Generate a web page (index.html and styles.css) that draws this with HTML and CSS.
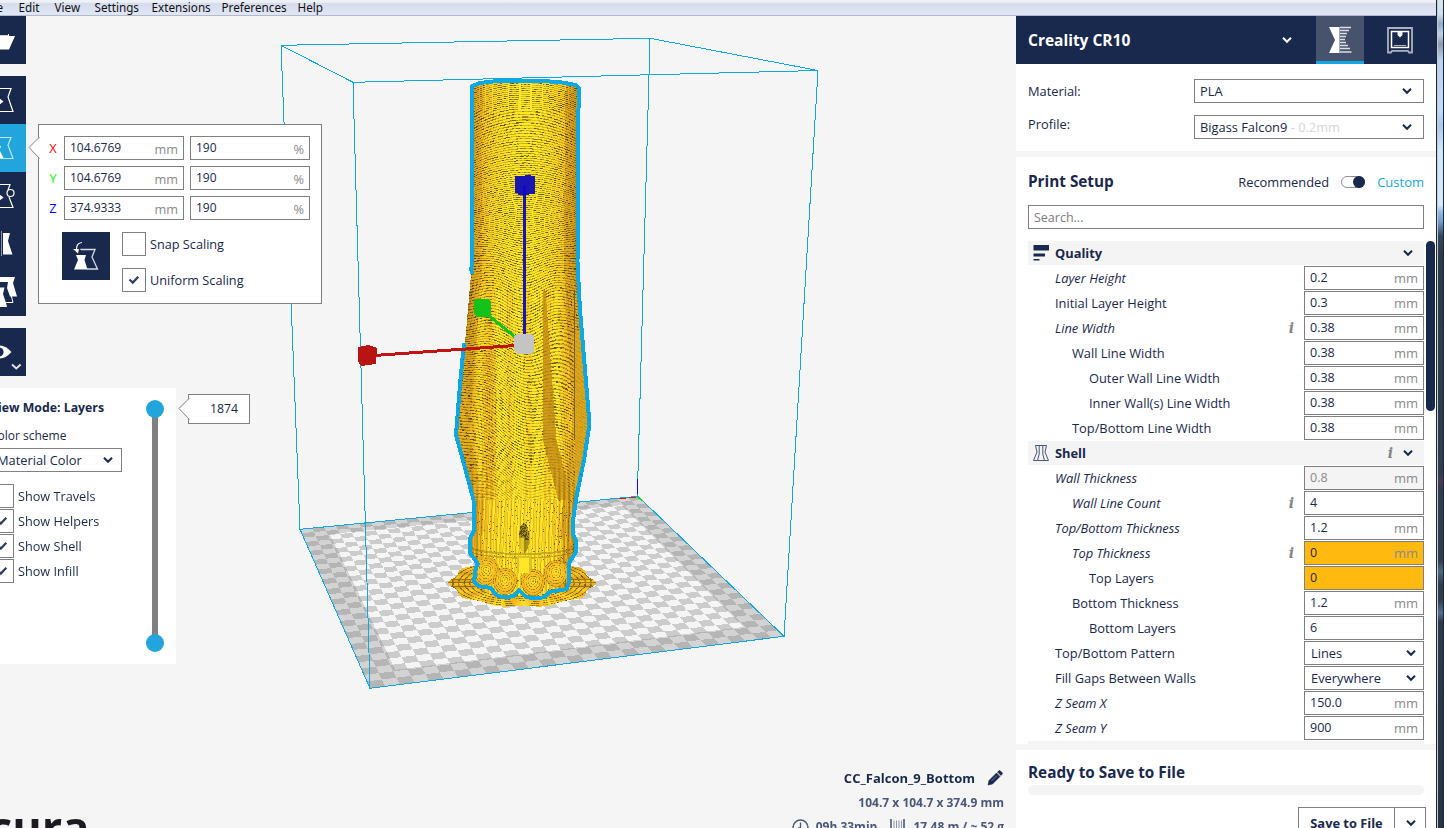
FILE: index.html
```html
<!DOCTYPE html>
<html lang="en">
<head>
<meta charset="utf-8">
<title>Cura</title>
<link rel="stylesheet" href="styles.css">
</head>
<body>
<svg class="defs" width="0" height="0">
  <symbol id="chev" viewBox="0 0 10 8"><path d="M1 1.8 L5 5.8 L9 1.8" fill="none" stroke="currentColor" stroke-width="2"/></symbol>
  <symbol id="check" viewBox="0 0 12 10"><path d="M1.5 4.5 L4.8 7.6 L10.3 1.8" fill="none" stroke="currentColor" stroke-width="2.2"/></symbol>
</svg>
<div class="window">
  <div class="app">
    <nav class="menubar">
      <span class="m-file">File</span><span class="m-edit">Edit</span><span class="m-view">View</span><span class="m-set">Settings</span><span class="m-ext">Extensions</span><span class="m-pref">Preferences</span><span>Help</span>
    </nav>
    <div class="main">
      <section class="stage">
        <canvas class="layer" id="bed" width="1016" height="812"></canvas>
        <svg class="layer" width="1016" height="812" viewBox="0 16 1016 812" shape-rendering="crispEdges" fill="none" stroke="#0fa8e0">
          <path d="M281 45.300 L650 38.300 L818 70.500 L353 82.300 Z M300 529.300 L638 496.300 L784 636.300 L370 688.300 Z M281 45.500 L300 529.500 M353 82.500 L370 688.500 M818 70.500 L784 636.500 M650 38.500 L637.300 496"/>
          <path d="M637.300 479 V494" stroke="#0a0af0"/><path d="M619 498.500 H626 M629 497.500 H636" stroke="#e01818"/><path d="M637 496.500 L642 500.500" stroke="#10e010" stroke-width="1.500"/>
        </svg>
        <canvas class="layer" id="model" width="1016" height="812"></canvas>
        <svg class="layer" width="1016" height="812" viewBox="0 16 1016 812" fill="none">
          <g stroke="#0ca9e4" stroke-width="4" stroke-linejoin="round" shape-rendering="crispEdges">
            <path d="M471.500 274 L472 86 L480 83 L502 80.500 L538 80.500 L562 82.500 L576 85 L579 88 L578 130 L577.500 262 L580 310 L585 370 L589.500 424 L584 460 L577 494 L573 520 L572.500 534 L576 540 L576 552 L569 563 L569 582 L567 589 L549 592 L545 597 L536 598.500 L526 597 L519 590 L514 596 L504 597.500 L496 595 L491 588 L478 586 L474 581 L476 567 L478 564 L470 553 L470 538 L474 531 L473.500 500 L465 468 L456 435 L460 385 L464 343"/>
            <path d="M465 345 L460 385 L456.500 434 L465 466 L474 501" stroke="#1070e8" stroke-width="1" stroke-dasharray="1 6"/>
            <path d="M585 370 L589.500 424 L584 460 L577 494" stroke="#1070e8" stroke-width="1" stroke-dasharray="1 6"/>
          </g>
          <g shape-rendering="crispEdges">
            <path d="M482 310 L520 341" stroke="#12c41a" stroke-width="3"/>
            <path d="M367 356 L522 345" stroke="#c01414" stroke-width="3"/>
            <path d="M524.500 185 V342" stroke="#1a14b4" stroke-width="3"/>
            <path d="M515 176 H525 V175 H531 V176 H535 V194 H529 V195 H518 V193 H515 Z" fill="#1a16b0"/>
            <path d="M524 185 H526 V195 H523 V185 Z" fill="#1208c8"/>
            <path d="M474 300 L478 299 H488 L491 302 V314 L489 317 H477 L474 314 Z" fill="#12c41a"/>
            <path d="M358 347 L368 345 L375 347 L377 349 L376 364 L361 366 L358 361 Z" fill="#b81414"/>
            <path d="M514 336 L517 334 H531 L534 337 V351 L531 354 H518 L514 351 Z" fill="#c4c4c4"/>
          </g>
        </svg>

        <div class="toolbar">
          <div class="tool"><svg viewBox="0 0 48 48"><path d="M12 18 H31 V20 H37 L31 33.500 H10 Z" fill="#fff"/><path d="M21 18.500 H30" stroke="#19284d" stroke-width="1.400"/></svg></div>
          <div class="group">
            <div class="tool"><svg viewBox="0 0 48 48" fill="none" stroke="#fff" stroke-width="1.200"><path d="M14 12.500 H33 L30 21 L35 35.500 H12"/><path d="M21 22 L25.500 25.500 L21 29 Z" fill="#fff" stroke="none"/></svg></div>
            <div class="tool active"><svg viewBox="0 0 48 48" fill="none" stroke="#bfe4f4" stroke-width="1.200"><path d="M14 13.500 H33 L30 21 L35 34.500 H12"/><path d="M14 22 H23 L21.500 26 L25.500 34 H12 Z" fill="#fff" stroke="none"/></svg></div>
            <div class="tool"><svg viewBox="0 0 48 48" fill="none" stroke="#fff" stroke-width="1.200"><path d="M14 12.500 H32 L30 18 M31 25 L35 35.500 H12"/><circle cx="32.500" cy="21" r="3.500"/><path d="M21 22 L25.500 25.500 L21 29 Z" fill="#fff" stroke="none"/></svg></div>
            <div class="tool"><svg viewBox="0 0 48 48"><path d="M25 13 H32 L30 21 L34.500 34.500 H25 Z" fill="#fff"/><path d="M23.500 11 V36" stroke="#8c96ae" stroke-width="1"/></svg></div>
            <div class="tool"><svg viewBox="0 0 48 48"><path d="M15 9 H37 L35 15 L39 28.500 H32 L29 20 L30 14 H18 Z" fill="#fff"/><path d="M16 19.500 H26.500 L25 26 L28 35 L29 39 H12 Z" fill="#fff"/><path d="M24 34.500 H35 L31.500 21" fill="none" stroke="#fff"/></svg></div>
          </div>
          <div class="tool"><svg viewBox="0 0 48 48"><path d="M10 24 Q22 11 33.500 24 Q22 37 10 24 Z" fill="#fff"/><circle cx="21" cy="24" r="4.600" fill="#19284d"/><path d="M34 36.500 L38.300 40.500 L42.600 36.500" fill="none" stroke="#dfe2ea" stroke-width="2"/></svg></div>
        </div>

        <div class="scale-panel">
          <svg class="pointer" viewBox="0 0 12 22"><path d="M11.500 0 L1 10.500 L11.500 21.500" fill="#fff" stroke="#808080"/></svg>
          <div class="axis"><b class="red">X</b><div class="field">104.6769<i>mm</i></div><div class="field">190<i>%</i></div></div>
          <div class="axis"><b class="green">Y</b><div class="field">104.6769<i>mm</i></div><div class="field">190<i>%</i></div></div>
          <div class="axis"><b class="blue">Z</b><div class="field">374.9333<i>mm</i></div><div class="field">190<i>%</i></div></div>
          <div class="scale-opts">
            <div class="reset"><svg viewBox="0 0 48 48"><path d="M19 18 V17.500 H33 L30 25 L35.500 37 H25" fill="none" stroke="#d6dae4" stroke-width="1.300"/><path d="M14 23 H24 L22.500 28 L25.500 37.500 H12 L16 28 Z" fill="#fff"/><path d="M20 10.500 Q14.500 11 14.500 17" fill="none" stroke="#fff" stroke-width="1.200"/><path d="M11 17 H17 L16 21.500 Z" fill="#fff"/></svg></div>
            <div class="checks">
              <label class="check"><span class="box"></span>Snap Scaling</label>
              <label class="check"><span class="box"><svg><use href="#check"/></svg></span>Uniform Scaling</label>
            </div>
          </div>
        </div>

        <div class="view-panel">
          <div class="view-left">
            <div class="view-title">View Mode: Layers</div>
            <div class="scheme">Color scheme</div>
            <div class="combo scheme-combo">Material Color<svg class="chev"><use href="#chev"/></svg></div>
            <div class="show-list">
              <label class="check"><span class="box"></span>Show Travels</label>
              <label class="check"><span class="box"><svg><use href="#check"/></svg></span>Show Helpers</label>
              <label class="check"><span class="box"><svg><use href="#check"/></svg></span>Show Shell</label>
              <label class="check"><span class="box"><svg><use href="#check"/></svg></span>Show Infill</label>
            </div>
          </div>
          <div class="slider"><span class="knob"></span><span class="track"></span><span class="knob"></span></div>
        </div>
        <div class="layer-label"><svg class="pointer" viewBox="0 0 12 22"><path d="M11.500 0 L1 10.500 L11.500 21.500" fill="#fff" stroke="#808080"/></svg>1874</div>

        <div class="logo">cura</div>
        <div class="job">
          <div class="job-name"><span>CC_Falcon_9_Bottom</span><svg viewBox="0 0 16 16"><path d="M1 15 L2 10.500 L9.500 3 L13 6.500 L5.500 14 Z M10.500 2 L12 .7 Q12.600 .3 13.200 .8 L15.200 2.800 Q15.700 3.400 15.200 4 L14 5.500 Z" fill="#19284d" stroke="#19284d" stroke-width=".6"/><path d="M4.500 11 L10 5.500" stroke="#9aa3b8" stroke-width=".7"/></svg></div>
          <div class="job-size">104.7 x 104.7 x 374.9 mm</div>
          <div class="job-time"><svg viewBox="0 0 17 17"><circle cx="8.500" cy="8.500" r="7.500" fill="none" stroke="#4a5777" stroke-width="1.500"/><path d="M8.500 3.500 V9 H6" fill="none" stroke="#4a5777" stroke-width="1.300"/></svg><span class="t-time">09h 33min</span><svg class="spool" viewBox="0 0 15 17"><path d="M1 0 V17 M14 0 V17" stroke="#4a5777" stroke-width="1.600"/><path d="M4 1.500 V14 M6.500 1.500 V14 M9 1.500 V14 M11.500 1.500 V14" stroke="#8a93a8"/></svg><span>17.48 m / ~ 52 g</span></div>
        </div>
      </section>

      <aside class="sidebar">
        <header class="head">
          <div class="machine">Creality CR10<svg class="chev"><use href="#chev"/></svg></div>
          <div class="tab on"><svg viewBox="0 0 48 48"><path d="M13 11 H23.500 V37 H13 L19 24 Z" fill="#fff"/><path d="M24 11.500 H35 M24 14.500 H33 M24 17.500 H31 M24 20.500 H30 M24 23.500 H29 M24 26.500 H30 M24 29.500 H32 M24 32.500 H34 M24 36 H35.500" stroke="#dcdfe6" stroke-width="1.700"/></svg></div>
          <div class="tab"><svg viewBox="0 0 48 48" fill="none" stroke="#a9b1c4" stroke-width="1.800"><path d="M12 36.500 V12 H36 V36.500 H33 L32 34.800 H16 L15 36.500 Z"/><rect x="15.500" y="15.500" width="17" height="16" stroke="#fff" stroke-width="1.500"/><path d="M18 29.500 H30" stroke-width="1"/><path d="M21.500 16 H26.500 V19 L24 21.500 L21.500 19 Z" fill="#fff" stroke="none"/></svg></div>
        </header>
        <div class="presets">
          <div class="preset p1"><span>Material:</span><div class="combo">PLA<svg class="chev"><use href="#chev"/></svg></div></div>
          <div class="preset"><span class="up">Profile:</span><div class="combo">Bigass Falcon9<em>&nbsp;- 0.2mm</em><svg class="chev"><use href="#chev"/></svg></div></div>
        </div>
        <div class="setup">
          <div class="setup-head"><h2>Print Setup</h2><span class="rec">Recommended</span><span class="switch"><span></span></span><span class="custom">Custom</span></div>
          <div class="search">Search...</div>
          <div class="list-wrap">
            <div class="list" id="list"></div>
            <div class="scroll"></div>
          </div>
        </div>
        <div class="save">
          <h2>Ready to Save to File</h2>
          <div class="progress"></div>
          <div class="save-btn"><span>Save to File</span><span class="drop"><svg class="chev"><use href="#chev"/></svg></span></div>
        </div>
      </aside>
    </div>
  </div>
  <div class="edge"></div>
</div>
<script src="script.js"></script>
</body>
</html>
```
FILE: styles.css
```css
* { box-sizing: border-box; }
html, body { margin: 0; height: 100%; overflow: hidden; }
body { width: 1444px; height: 828px; font: 12.850px/18px "Open Sans", sans-serif; color: #19284d; background: #f5f5f5; }
.defs { position: absolute; }
.window { display: flex; height: 828px; overflow: hidden; }
.app { width: 1436px; display: flex; flex-direction: column; }
.edge { width: 8px; border-left: 1px solid #1d2630; border-right: 1px solid #1c2530; box-shadow: inset 1px 0 #c3ccd6;
  background: linear-gradient(#d4e8e6 0, #cfe2ee 14px, #8fa9c6 24px, #bcd4ec 34px, #8c9cb0 44px, #b9d3ef 60px, #bfdcf8 110px, #a9c9ea 125px, #cfe6fb 150px, #d6eafc 205px, #8fbbe4 212px, #6f9ccb 222px, #33465a 236px, #2a3a4b 260px, #2c3d4e 470px, #4b3a52 482px, #2c3d4e 490px, #2c3d4e 560px, #4d6680 571px, #2c3d4e 585px, #2c3d4e 600px, #54708c 613px, #2a3a4a 622px, #263544 828px); }

.menubar { height: 16px; flex: none; display: flex; align-items: center; background: linear-gradient(#f0f2f8 0, #e8ebf4 3px, #d6dcec 3px, #e1e6f6 15px); border-bottom: 1px solid #b2b9c8; font: 11.700px/14px "Noto Sans", sans-serif; color: #111; padding-bottom: 2px; overflow: hidden; white-space: nowrap; }
.menubar span { flex: none; }
.m-file { width: 34px; margin-left: -15.500px; } .m-edit { width: 36px; } .m-view { width: 40px; } .m-set { width: 57px; } .m-ext { width: 70px; } .m-pref { width: 76px; }

.main { flex: 1; display: flex; min-height: 0; }
.stage { width: 1016px; height: 812px; position: relative; overflow: hidden; background: #f5f5f5; }
.layer { position: absolute; left: 0; top: 0; }

.toolbar { position: absolute; left: -22px; top: 0; width: 48px; display: flex; flex-direction: column; gap: 12px; }
.tool { height: 48px; background: #19284d; }
.tool svg, .reset svg, .tab svg { display: block; width: 48px; height: 48px; }
.tool.active { background: #22a5dc; }

.field { position: relative; display: flex; justify-content: space-between; align-items: center; height: 24px; border: 1px solid #808080; background: #fff; padding: 0 5px; font-size: 12px; }
.field i { font-style: normal; color: #8a8a8a; font-size: 13px; }
.combo { display: flex; align-items: center; height: 24px; border: 1px solid #808080; background: #fff; padding: 0 11px 0 5px; white-space: nowrap; }
.combo em { font-style: normal; color: #d6d6d6; }
.chev { width: 10px; height: 8px; margin-left: auto; flex: none; display: block; }
.pointer { position: absolute; width: 12px; height: 22px; left: -11px; }

.scale-panel { position: absolute; left: 38px; top: 108px; width: 284px; height: 180px; border: 1px solid #808080; background: #fff; padding: 11px 11px 0 9px; }
.scale-panel .pointer { top: 12px; }
.axis { display: flex; gap: 6px; margin-bottom: 6px; align-items: center; }
.axis b { width: 10px; text-align: center; font-weight: 400; }
.axis .field { width: 120px; }
.axis .field i { font-size: 12.700px; padding-top: 1px; }
.red { color: #f00; } .green { color: #0f0; } .blue { color: #00f; }
.scale-opts { display: flex; gap: 12px; padding: 6px 0 0 14px; }
.reset { width: 48px; height: 48px; background: #19284d; }
.checks { display: flex; flex-direction: column; gap: 12px; }
.check { display: flex; align-items: center; gap: 4px; white-space: nowrap; font-size: 12.700px; }
.box { width: 24px; height: 24px; border: 1px solid #808080; background: #fff; display: flex; align-items: center; justify-content: center; }
.box svg { width: 12px; height: 10px; color: #2f3d60; }

.view-panel { position: absolute; left: -22px; top: 372px; width: 198px; height: 276px; background: #fff; display: flex; justify-content: space-between; padding: 10px 12px 0 12px; }
.view-left { width: 132px; }
.view-title { font-weight: 700; white-space: nowrap; font-size: 12.300px; padding-top: 1px; }
.scheme { margin-top: 10px; font-size: 12px; }
.scheme-combo { margin-top: 3px; padding: 0 8px 0 6px; }
.show-list { display: flex; flex-direction: column; gap: 1px; margin-top: 12px; }
.slider { width: 18px; height: 254px; display: flex; flex-direction: column; align-items: center; padding-top: 2px; }
.knob { width: 18px; height: 18px; border-radius: 50%; background: #22a5dc; z-index: 1; }
.track { width: 6px; flex: 1; background: #808080; margin: -2px 0; }
.show-list .check { margin-right: 0; }
.show-list .box { width: 24px; }
.layer-label { position: absolute; left: 188px; top: 378px; width: 62px; height: 30px; border: 1px solid #808080; background: #fff; padding: 5px 11px 0 0; text-align: right; font-size: 12.300px; }
.layer-label .pointer { top: 3px; }

.logo { position: absolute; left: -11px; top: 781px; font: 700 45px/60px "Open Sans", sans-serif; color: #1c1a1f; }
.job { position: absolute; right: 12px; top: 753px; width: 240px; display: flex; flex-direction: column; align-items: flex-end; font-weight: 700; font-size: 12px; color: #4a5777; white-space: nowrap; }
.job-name { display: flex; align-items: center; gap: 13px; color: #19284d; font-size: 13px; padding-right: 1px; }
.job-name span { margin-right: -1px; }
.job-name svg { width: 16px; height: 16px; }
.job-size { margin-top: 7px; }
.job-time { margin-top: 6px; display: flex; align-items: center; }
.job-time svg { width: 17px; height: 17px; }
.job-time .spool { width: 15px; margin: 0 8px 0 13px; }
.t-time { margin-left: 7px; }

.sidebar { width: 420px; display: flex; flex-direction: column; background: #f5f5f5; }
.head { height: 48px; flex: none; display: flex; background: #19284d; color: #fff; }
.machine { width: 300px; display: flex; align-items: center; padding: 0 24px 0 12px; font-weight: 700; font-size: 15.500px; }
.tab { width: 48px; }
.tab + .tab { margin-left: 12px; }
.on { background: #47526d; border-bottom: 3px solid #0fa8e4; }
.presets { height: 87px; flex: none; background: #fff; padding: 15px 12px 0; }
.preset { display: flex; justify-content: space-between; align-items: center; }
.p1 { margin-bottom: 12px; }
.up { padding-bottom: 6px; }
.preset .combo { width: 230px; }
.setup { margin-top: 6px; height: 587px; flex: none; background: #fff; padding: 15px 0 0 12px; display: flex; flex-direction: column; overflow: hidden; }
h2 { margin: 0; font-size: 15.300px; line-height: 18px; }
.setup-head { display: flex; align-items: center; padding-right: 12px; height: 18px; }
.setup-head h2 { margin-right: auto; }
.switch { width: 24px; height: 12px; border: 1px solid #909090; border-radius: 6px; margin: 2px 12px 0; display: flex; justify-content: flex-end; align-items: center; }
.switch span { width: 12px; height: 12px; border-radius: 50%; background: #19284d; margin-right: -1px; }
.custom { color: #0fa8e4; font-size: 13px; }
.rec, .custom { padding-top: 2px; }
.search { margin: 15px 12px 12px 0; height: 24px; flex: none; border: 1px solid #808080; color: #7c7c7c; padding: 3px 5px; font-size: 12.500px; }
.list-wrap { display: flex; gap: 2px; }
.list { width: 396px; display: flex; flex-direction: column; gap: 1px; }
.cat { height: 24px; flex: none; background: #f4f4f4; display: flex; align-items: center; font-weight: 700; padding-right: 11px; }
.cat svg.ic { width: 16px; height: 16px; margin: 0 6px 0 5px; }
.cat .chev { margin-left: 0; }
.info { margin-left: auto; font: italic 700 14px/20px "DejaVu Serif", serif; color: #848484; margin-right: 10px; }
.cat .push { margin-left: auto; }
.row { display: flex; align-items: center; height: 24px; flex: none; padding-left: 27px; }
.row .info { margin-right: 10px; }
.l1 { padding-left: 44px; } .l2 { padding-left: 61px; }
.it { font-style: italic; }
.row .field, .row .combo { width: 120px; }
.row > :last-child { margin-left: auto; }
.row > .info + * { margin-left: 0; }
.row .combo { padding: 0 7px 0 6px; }
.row .field { font-size: 12.500px; }
.field.warn { background: #ffb90f; }
.field.off { background: #f4f4f4; color: #8a8a8a; }
.scroll { width: 9px; height: 170px; border-radius: 5px; background: #19284d; }
.save { margin-top: 6px; flex: 1; background: #fff; padding: 13px 12px 0; display: flex; flex-direction: column; }
.progress { height: 10px; border-radius: 5px; background: #f4f4f4; margin-top: 4px; flex: none; }
.save-btn { align-self: flex-end; margin: 12px -2px 0 0; width: 128px; height: 32px; flex: none; display: flex; border: 1px solid #808080; font-weight: 700; line-height: 30px; }
.save-btn > span:first-child { width: 95px; text-align: center; }
.drop { flex: 1; border-left: 1px solid #808080; display: flex; align-items: center; padding-right: 9px; }
```
FILE: script.js
```js
// Settings list
const rows = [
  ['cat', 'Quality', 'q'],
  [0, 'Layer Height', '0.2', 'mm', 'i'],
  [0, 'Initial Layer Height', '0.3', 'mm'],
  [0, 'Line Width', '0.38', 'mm', 'i*'],
  [1, 'Wall Line Width', '0.38', 'mm'],
  [2, 'Outer Wall Line Width', '0.38', 'mm'],
  [2, 'Inner Wall(s) Line Width', '0.38', 'mm'],
  [1, 'Top/Bottom Line Width', '0.38', 'mm'],
  ['cat', 'Shell', 's'],
  [0, 'Wall Thickness', '0.8', 'mm', 'i', 'off'],
  [1, 'Wall Line Count', '4', '', 'i*'],
  [0, 'Top/Bottom Thickness', '1.2', 'mm', 'i'],
  [1, 'Top Thickness', '0', 'mm', 'i*', 'warn'],
  [2, 'Top Layers', '0', '', '', 'warn'],
  [1, 'Bottom Thickness', '1.2', 'mm'],
  [2, 'Bottom Layers', '6', ''],
  [0, 'Top/Bottom Pattern', 'Lines', 'combo'],
  [0, 'Fill Gaps Between Walls', 'Everywhere', 'combo'],
  [0, 'Z Seam X', '150.0', 'mm', 'i'],
  [0, 'Z Seam Y', '900', 'mm', 'i'],
  ['cat', '', '']
];
const icons = {
  q: '<svg class="ic" viewBox="0 0 16 16"><path d="M0.500 0 H16 V5.500 H0.500 Z M0.500 8.500 H12 V11.500 H0.500 Z M0.500 14 H6.500 V15.500 H0.500 Z" fill="#19284d"/></svg>',
  s: '<svg class="ic" viewBox="0 0 16 16" fill="none" stroke="#4b5674" stroke-width="1"><path d="M2.500 .5 H13.500 L12 7 L15.500 15.500 H11.500 L9.800 9 V1 M2.500 .5 L4 7 L.5 15.500 H4.500 L6.200 9 V1 M4.500 15.500 H11.500"/></svg>',
  '': ''
};
const chev = '<svg class="chev"><use href="#chev"/></svg>';
document.getElementById('list').innerHTML = rows.map(r => {
  if (r[0] === 'cat') {
    return `<div class="cat">${icons[r[2]]}<span>${r[1]}</span>${r[2] === 's' ? '<span class="info">i</span>' : '<span class="push"></span>'}${r[1] ? chev : ''}</div>`;
  }
  const [lvl, name, val, unit, flag = '', state = ''] = r;
  const box = unit === 'combo' ? `<div class="combo">${val}${chev}</div>` : `<div class="field ${state}">${val}<i>${unit}</i></div>`;
  return `<div class="row l${lvl}"><span class="${flag ? 'it' : ''}">${name}</span>${flag === 'i*' ? '<span class="info">i</span>' : ''}${box}</div>`;
}).join('');

// Scene coordinates are window coordinates; the canvas starts 16px down.
const TOP = 16, W = 1016, H = 812;
const clamp = (v, a, b) => Math.max(a, Math.min(b, v));
const fr = v => v - Math.floor(v);
const rnd = (x, y) => fr(Math.sin(x * 12.9898 + y * 78.233) * 43758.5453);

function paint(id, shade) {
  const ctx = document.getElementById(id).getContext('2d');
  const img = ctx.createImageData(W, H);
  for (let j = 0; j < H; j++) for (let i = 280; i < 830; i++) {
    const c = shade(i + 0.5, j + TOP + 0.5);
    if (!c) continue;
    const k = (j * W + i) * 4;
    img.data[k] = c[0]; img.data[k + 1] = c[1]; img.data[k + 2] = c[2]; img.data[k + 3] = 255;
  }
  ctx.putImageData(img, 0, 0);
}

// Build plate: unit square projected on the quad, inverted per pixel
const P = [[300, 529], [638, 496], [784, 636], [370, 688]];
const dx1 = P[1][0] - P[2][0], dx2 = P[3][0] - P[2][0], sx = P[0][0] - P[1][0] + P[2][0] - P[3][0];
const dy1 = P[1][1] - P[2][1], dy2 = P[3][1] - P[2][1], sy = P[0][1] - P[1][1] + P[2][1] - P[3][1];
const den = dx1 * dy2 - dx2 * dy1;
const g = (sx * dy2 - dx2 * sy) / den, h = (dx1 * sy - sx * dy1) / den;
const a = P[1][0] - P[0][0] + g * P[1][0], b = P[3][0] - P[0][0] + h * P[3][0], c = P[0][0];
const d = P[1][1] - P[0][1] + g * P[1][1], e = P[3][1] - P[0][1] + h * P[3][1], f = P[0][1];
paint('bed', (x, y) => {
  if (y < 490 || y > 690) return null;
  const a1 = a - g * x, b1 = b - h * x, c1 = x - c, a2 = d - g * y, b2 = e - h * y, c2 = y - f;
  const dt = a1 * b2 - b1 * a2, u = (c1 * b2 - b1 * c2) / dt, v = (a1 * c2 - c1 * a2) / dt;
  if (u < 0 || v < 0 || u > 1 || v > 1) return null;
  const dark = (Math.floor(u * 30) + Math.floor(v * 30)) % 2 === 1;
  const rim = u < 0.073 || u > 0.927 || v < 0.06 || v > 0.927;
  const s = rim ? (dark ? 181 : 211) : (dark ? 204 : 245);
  return [s, s, s];
});

// Sliced model
const edgeL = [[80, 472], [274, 471], [343, 465], [435, 456], [500, 474], [531, 474], [538, 470], [553, 470], [564, 478], [583, 474], [600, 480]];
const edgeR = [[80, 579], [262, 577], [370, 585], [424, 589], [460, 584], [494, 577], [520, 573], [534, 572], [540, 576], [552, 576], [563, 569], [600, 567]];
function lerp(t, y) {
  for (let i = 1; i < t.length; i++) if (y <= t[i][0]) {
    const p = t[i - 1], q = t[i];
    return p[1] + (q[1] - p[1]) * (y - p[0]) / (q[0] - p[0]);
  }
  return t[t.length - 1][1];
}
function mix(s, dot) {
  const base = [[150, 110, 12], [214, 160, 26], [246, 190, 32], [255, 230, 40]];
  const t = clamp(s, 0, 0.999) * 3, i = Math.floor(t), q = t - i;
  return base[i].map((n, k) => (n + (base[i + 1][k] - n) * q) * (1 - dot));
}
const feet = [[486, 570, 13], [505, 580, 12], [533, 581, 12], [556, 572, 12]];
paint('model', (x, y) => {
  if (y < 80 || y > 612) return null;
  const L = lerp(edgeL, y), R = lerp(edgeR, y), cx = (L + R) / 2, hw = (R - L) / 2, u = (x - cx) / hw;
  let bottom = 586 + 10 * Math.sqrt(Math.max(0, 1 - u * u));
  if (Math.abs(u) <= 1 && y < bottom && y > 86 - 5 * Math.sqrt(Math.max(0, 1 - u * u))) {
    const w = Math.sqrt(Math.max(0, 1 - u * u));
    let s = 0.45 + 0.55 * Math.pow(w, 1.3) - (u > 0.75 ? 0.28 : 0);
    if (u < -0.8) s -= 0.18;
    let dot = 0;
    if (y < 500) {
      // the layer pitch is close to two pixels, so a slow phase drift shows as curved bands
      const drop = clamp((y - 200) / 90, 0, 1);
      const drift = 0.0009 * Math.min((y - 200) * (y - 200), 8100) + 0.16 * Math.max(0, y - 290);
      const ph = 0.5 * y + drift + 5.5 * (1 - u * u) * (1 - drop * 0.6) + drop * 1.8 * Math.cos(u * 5.5) + (y > 330 ? Math.min(1, (y - 330) / 60) * 0.12 * (x - 520) : 0);
      if (fr(ph) < 0.45) dot = 0.13 + 0.5 * Math.pow(rnd(Math.floor(x / 2), y), 2);
      if (y > 290) {
        s += 0.1 * Math.sin(x * 0.33);
        const f0 = 543 + Math.max(0, y - 440) * 0.25, f1 = 544 + (y - 270) * 0.073 + Math.max(0, y - 440) * 0.18;
        if (x > f0 && x < f1) { s = 0.3; dot *= 0.35; }
        if (x > 575 && y > 330) { s = 0.34 + 0.12 * fr(y * 0.2 - x * 0.04); dot *= 0.25; }
        if (Math.abs(x - 574.5) < 1 && y < 440) dot = 0.45;
        if (x > 482 && x < 496 && y > 350) s -= 0.3 * Math.sin(y * 0.5 - (x - 489) ** 2 * 0.03) ** 2;
      }
      if (y > 460) {
        const k = (y - 460) / 40;
        s += k * 0.2 * Math.sin(x * 1.3);
        dot *= 1 - 0.5 * k;
      }
    } else {
      s += 0.2 * Math.sin(x * 1.3 + Math.sin(y * 0.05));
      if (fr(x * 0.31 + y * 0.015) < 0.3) dot = 0.14;
      if (rnd(x, y) < 0.04) dot = 0.5;
      if (Math.abs(y - 546 - 8 * w) < 1 || Math.abs(y - 550 - 8 * w) < 0.7) dot = 0.22;
      const ox = (x - 524) / 5, oy = (y - 538) / 15;
      if (ox * ox + oy * oy < 1) { dot = oy < 0.2 && rnd(x, y) < 0.5 ? 0.65 : 0.35; if (x < 524 && oy > 0) dot = 0.12; }
      if (x > 517 && x < 531 && y > 556 && y < 573) { s = 1; dot = x < 519 || x > 529 || y < 558 ? 0.15 : 0; }
      for (const [fx, fy, r] of feet) {
        const q = Math.hypot(x - fx, (y - fy) * (y > fy ? 0.8 : 1));
        if (q < r && !(x > 517 && x < 531 && y < 573)) { s = 0.98 - q / r * 0.45; dot = fr(q * 0.45) < 0.35 ? 0.4 * rnd(x, y) : 0; }
      }
    }
    return mix(s, dot);
  }
  // brim around the foot of the part
  const bx = (x - 522) / 74, by = (y - 583) / 24.5, ang = Math.atan2(by, bx);
  const rad = Math.hypot(bx, by);
  if (rad < 0.965 + 0.035 * Math.cos(ang * 10)) {
    const ray = fr(ang * 2.5 + rad * 0.2);
    let dot = fr(rad * 13) < 0.3 ? 0.1 + 0.45 * rnd(x, y) : 0;
    if (Math.abs(by) < 0.25 && fr(y * 0.28) < 0.3) dot = 0.35;
    return mix(0.38 + 0.7 * Math.abs(ray - 0.5) + 0.25 * Math.max(0, by), dot);
  }
  return null;
});
```
